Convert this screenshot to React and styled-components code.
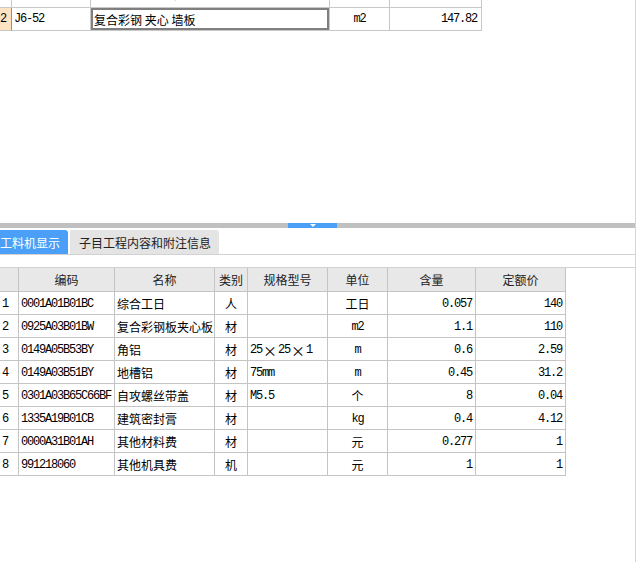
import React from 'react';
import styled, { createGlobalStyle } from 'styled-components';

const GlobalStyle = createGlobalStyle`
  html, body {
    margin: 0;
    padding: 0;
    background: #fff;
  }
  body {
    font-family: "Noto Sans CJK SC", "Liberation Sans", sans-serif;
    font-size: 12px;
    color: #000;
  }
`;

const Page = styled.div`
  width: 635px;
  height: 562px;
  border-right: 1px solid #d6d6d6;
  overflow: hidden;
  display: flex;
  flex-direction: column;
`;

const TopPane = styled.div`
  height: 223px;
  overflow: hidden;
`;

const TopRows = styled.div`
  margin-top: -15px;
`;

const TopRow = styled.div`
  display: grid;
  grid-template-columns: 12px 79px 239px 60px 92px;
  height: 23px;
`;

const TopCell = styled.div`
  box-sizing: border-box;
  border-right: 1px solid ${(p) => (p.$blue ? '#4a9ef5' : '#c8c8c8')};
  border-bottom: 1px solid #c8c8c8;
  background: ${(p) => (p.$head ? '#fde3c2' : '#fff')};
  display: flex;
  align-items: center;
  justify-content: ${(p) => (p.$align === 'right' ? 'flex-end' : p.$align === 'center' ? 'center' : 'flex-start')};
  padding: 0 ${(p) => (p.$align === 'right' ? '4px' : '2px')} ${(p) => (p.$raised ? '5px' : '0')};
  overflow: hidden;
  white-space: pre;
  font-family: ${(p) => (p.$mono ? '"Liberation Mono", monospace' : '"Noto Sans CJK SC", sans-serif')};
  letter-spacing: ${(p) => (p.$mono ? '-1.2px' : '0')};
  box-shadow: ${(p) => (p.$selected ? 'inset 0 0 0 2px #7f7f7f' : 'none')};
`;

const Splitter = styled.div`
  height: 5px;
  background: #c0c0c0;
  display: flex;
`;

const SplitHandle = styled.div`
  margin-left: 288px;
  width: 49px;
  height: 5px;
  background: #4b9ff6;
  display: flex;
  justify-content: center;
  padding-top: 1px;
  box-sizing: border-box;
`;

const Arrow = styled.div`
  width: 0;
  height: 0;
  border-left: 3px solid transparent;
  border-right: 3px solid transparent;
  border-top: 3px solid #fff;
`;

const TabBar = styled.div`
  margin-top: 2px;
  margin-left: -8px;
  height: 24px;
  display: flex;
  gap: 2px;
  border-bottom: 1px solid #d2d2d2;
`;

const Tab = styled.div`
  height: 24px;
  padding: 0 8px 0 ${(p) => (p.$active ? '8px' : '9px')};
  display: flex;
  align-items: center;
  font-size: 12px;
  background: ${(p) => (p.$active ? '#4b9ff6' : '#e4e4e4')};
  color: ${(p) => (p.$active ? '#fff' : '#222')};
  border-radius: 0 3px 0 0;
`;

const Lower = styled.div`
  margin-top: 12px;
  border-top: 1px solid #d2d2d2;
`;

const cols = '19px 96px 100px 33px 80px 60px 88px 90px';

const GridRow = styled.div`
  display: grid;
  grid-template-columns: ${cols};
  height: ${(p) => (p.$head ? '24px' : '23px')};
`;

const HeadCell = styled.div`
  box-sizing: border-box;
  background: #e8e8e8;
  border-right: 1px solid #c4c4c4;
  border-bottom: 1px solid #c4c4c4;
  display: flex;
  align-items: center;
  justify-content: center;
  color: #222;
  font-size: 12px;
`;

const Cell = styled.div`
  box-sizing: border-box;
  border-right: 1px solid #c4c4c4;
  border-bottom: 1px solid #c4c4c4;
  display: flex;
  align-items: center;
  justify-content: ${(p) => (p.$align === 'right' ? 'flex-end' : p.$align === 'center' ? 'center' : 'flex-start')};
  padding: ${(p) => (p.$mono ? '1px' : '0')} ${(p) => (p.$align === 'right' ? '3px' : '2px')} 0 2px;
  white-space: nowrap;
  overflow: hidden;
  font-family: ${(p) => (p.$mono ? '"Liberation Mono", monospace' : '"Noto Sans CJK SC", sans-serif')};
  letter-spacing: ${(p) => (p.$mono ? '-1.2px' : '0')};
  font-size: 12px;
`;

const Times = styled.span`
  font-family: "Noto Sans CJK SC", sans-serif;
  font-size: 14px;
  letter-spacing: 0;
  margin: 0 1px;
`;

const headers = ['', '编码', '名称', '类别', '规格型号', '单位', '含量', '定额价'];

const rows = [
  ['1', '0001A01B01BC', '综合工日', '人', '', '工日', '0.057', '140'],
  ['2', '0925A03B01BW', '复合彩钢板夹心板', '材', '', 'm2', '1.1', '110'],
  ['3', '0149A05B53BY', '角铝', '材', '25×25×1', 'm', '0.6', '2.59'],
  ['4', '0149A03B51BY', '地槽铝', '材', '75mm', 'm', '0.45', '31.2'],
  ['5', '0301A03B65C66BF', '自攻螺丝带盖', '材', 'M5.5', '个', '8', '0.04'],
  ['6', '1335A19B01CB', '建筑密封膏', '材', '', 'kg', '0.4', '4.12'],
  ['7', '0000A31B01AH', '其他材料费', '材', '', '元', '0.277', '1'],
  ['8', '991218060', '其他机具费', '机', '', '元', '1', '1'],
];

const isAscii = (s) => /^[\x20-\x7e]+$/.test(s);

const renderSpec = (s) => {
  if (!s.includes('×')) return s;
  return s.split('×').map((p, i) => (
    <React.Fragment key={i}>
      {i > 0 && <Times>×</Times>}
      {p}
    </React.Fragment>
  ));
};

const App = () => (
  <>
    <GlobalStyle />
    <Page>
      <TopPane>
        <TopRows>
          <TopRow>
            <TopCell $raised />
            <TopCell $mono $raised>J6-51</TopCell>
            <TopCell $raised>复合彩钢 夹心 墙板</TopCell>
            <TopCell $align="center" />
            <TopCell $align="right" />
          </TopRow>
          <TopRow>
            <TopCell $head $blue $mono style={{ paddingLeft: 0 }}>2</TopCell>
            <TopCell $mono>J6-52</TopCell>
            <TopCell $selected style={{ paddingLeft: 3 }}>复合彩钢 夹心 墙板</TopCell>
            <TopCell $align="center" $mono>m2</TopCell>
            <TopCell $align="right" $mono>147.82</TopCell>
          </TopRow>
        </TopRows>
      </TopPane>
      <Splitter>
        <SplitHandle>
          <Arrow />
        </SplitHandle>
      </Splitter>
      <TabBar>
        <Tab $active>工料机显示</Tab>
        <Tab>子目工程内容和附注信息</Tab>
      </TabBar>
      <Lower>
        <GridRow $head>
          {headers.map((h, i) => (
            <HeadCell key={i}>{h}</HeadCell>
          ))}
        </GridRow>
        {rows.map((r) => (
          <GridRow key={r[0]}>
            <Cell $mono>{r[0]}</Cell>
            <Cell $mono>{r[1]}</Cell>
            <Cell>{r[2]}</Cell>
            <Cell $align="center">{r[3]}</Cell>
            <Cell $mono>{renderSpec(r[4])}</Cell>
            <Cell $align="center" $mono={isAscii(r[5])}>{r[5]}</Cell>
            <Cell $align="right" $mono>{r[6]}</Cell>
            <Cell $align="right" $mono>{r[7]}</Cell>
          </GridRow>
        ))}
      </Lower>
    </Page>
  </>
);

export default App;
